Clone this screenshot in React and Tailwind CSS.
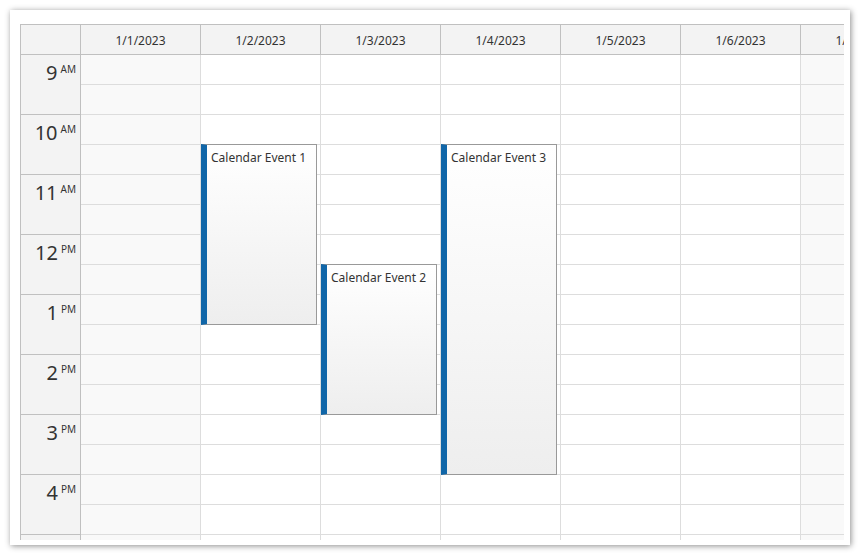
const days = ['1/1/2023', '1/2/2023', '1/3/2023', '1/4/2023', '1/5/2023', '1/6/2023', '1/7/2023'];
const weekend = [true, false, false, false, false, false, true];
const hours = [
  ['9', 'AM'],
  ['10', 'AM'],
  ['11', 'AM'],
  ['12', 'PM'],
  ['1', 'PM'],
  ['2', 'PM'],
  ['3', 'PM'],
  ['4', 'PM'],
  ['5', 'PM'],
];

// start/end in minutes from 9:00
const events = [
  { day: 1, start: 90, end: 270, text: 'Calendar Event 1' },
  { day: 2, start: 210, end: 360, text: 'Calendar Event 2' },
  { day: 3, start: 90, end: 420, text: 'Calendar Event 3' },
];

function TimeHeader() {
  return (
    <div className="flex w-[60px] shrink-0 flex-col bg-[#f3f3f3]">
      {hours.map(([h, ap]) => (
        <div key={h + ap} className="flex h-[60px] shrink-0 justify-end border-b border-r border-[#c0c0c0] pr-[4px] pt-[8px] text-[#333]">
          <span className="text-[20px] leading-[20px]">{h}</span>
          <span className="ml-[3px] text-[10px] leading-[12px]">{ap}</span>
        </div>
      ))}
    </div>
  );
}

function DayColumn({ index }) {
  const list = events.filter((e) => e.day === index);
  return (
    <div className={`relative flex w-[120px] shrink-0 flex-col ${weekend[index] ? 'bg-[#f9f9f9]' : 'bg-white'}`}>
      {hours.flatMap((h) => [0, 1]).map((_, i) => (
        <div key={i} className="h-[30px] shrink-0 border-b border-r border-[#dddddd]" />
      ))}
      {list.map((e) => (
        <div
          key={e.text}
          className="absolute left-0 w-[116px] border border-l-[6px] border-[#999] border-l-[#1066a8] bg-gradient-to-b from-white to-[#eeeeee] pl-[4px] pt-[5px] text-[12px] leading-[16px] text-[#333]"
          style={{ top: e.start - 1, height: e.end - e.start + 1 }}
        >
          {e.text}
        </div>
      ))}
    </div>
  );
}

export default function App() {
  return (
    <div className="h-[555px] w-[860px] bg-white p-[10px] font-['Segoe_UI','Noto_Sans',sans-serif]">
      <div className="h-[535px] w-[840px] bg-white pl-[10px] pt-[14px] shadow-[1px_1px_6px_rgba(0,0,0,0.45)]">
        <div className="h-[516px] w-[824px] overflow-hidden border-l border-t border-[#c0c0c0]">
          <div className="flex w-max">
            <div className="h-[30px] w-[60px] shrink-0 border-b border-r border-[#c0c0c0] bg-[#f3f3f3]" />
            {days.map((d) => (
              <div key={d} className="flex h-[30px] w-[120px] shrink-0 items-center justify-center border-b border-r border-[#c0c0c0] bg-[#f3f3f3] pt-[2px] text-[12px] text-[#333]">
                {d}
              </div>
            ))}
          </div>
          <div className="flex w-max">
            <TimeHeader />
            {days.map((d, i) => (
              <DayColumn key={d} index={i} />
            ))}
          </div>
        </div>
      </div>
    </div>
  );
}
